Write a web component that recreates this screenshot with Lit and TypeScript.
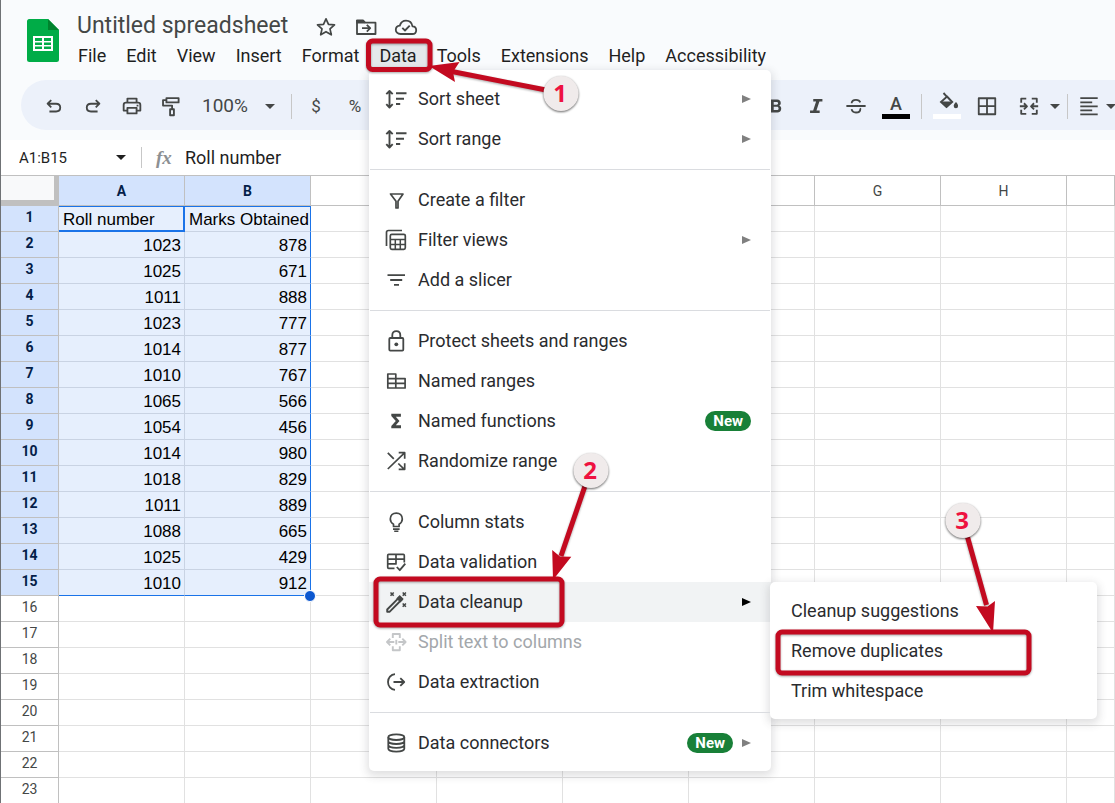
import { LitElement, html, css, svg, nothing, TemplateResult } from "lit";
import { customElement, property } from "lit/decorators.js";
import { classMap } from "lit/directives/class-map.js";

const s = (d: string, w = 1.8) => svg`<path d=${d} fill="none" stroke="currentColor" stroke-width=${w} stroke-linejoin="round" />`;
const f = (d: string) => svg`<path d=${d} fill="currentColor" />`;

const ICONS: Record<string, unknown> = {
  star: svg`${s("M12 3.8l2.500 5.500 6 .6-4.500 4 1.300 5.900L12 16.700l-5.300 3.100L8 13.900l-4.500-4 6-.6z", 1.7)}`,
  folder: svg`${s("M3 5.5h6.2l2 2.2H21.5V19H3z")}${f("M2.2 5h7l1.8 3.4H2.2z")}${s("M8 13.2h8M12.8 9.8l3.4 3.4-3.4 3.4")}`,
  cloud: svg`${s("M6.6 19C3.4 19 1.8 17 1.8 14.8c0-2.300 1.700-4 4-4.200C6.800 7.500 9.200 5.700 12 5.700c3.400 0 5.900 2.300 6.500 5.700 2.200.1 3.700 1.700 3.700 3.800 0 2.200-1.600 3.800-3.900 3.800z")}${s("M8.300 12.800l2.700 2.700 4.700-4.800")}`,
  undo: svg`${s("M9 5.500L5 9.500l4 4M5.300 9.500h8.900c2.900 0 4.600 1.700 4.600 4.200s-1.700 4.300-4.600 4.300H7", 2)}`,
  redo: svg`${s("M15 5.500l4 4-4 4M18.700 9.500H9.800c-2.900 0-4.600 1.700-4.600 4.200S6.900 18 9.800 18H17", 2)}`,
  print: svg`${s("M7 8V3.900h10V8M7 17H2.900V11c0-1.600.9-2.600 2.500-2.600h13.200c1.600 0 2.500 1 2.500 2.600v6H17M7 14h10v6.100H7z", 2)}${f("M17 10.500h2v2h-2z")}`,
  paint: svg`${s("M7 3.400h13.300v4.700H7zM7 5.500H3.300v6h9.900v4M11 15.500h4.200v6.600H11z", 2)}`,
  bold: svg`${f("M6.500 5h6.700c2.500 0 4 1.400 4 3.600 0 1.500-.7 2.400-1.800 2.900 1.500.5 2.300 1.700 2.300 3.400 0 2.500-1.600 4.100-4.400 4.100H6.500zm3 2.500v3h3.200c1 0 1.600-.6 1.600-1.500s-.6-1.500-1.600-1.500zm0 5.300v3.600h3.500c1.100 0 1.800-.7 1.800-1.800s-.7-1.800-1.800-1.800z")}`,
  italic: svg`${f("M9 4.300h10v2.800h-3.300l-3.200 9.800h3.500v2.800H5.500v-2.800h3.400l3.200-9.800H9z")}`,
  strike: svg`${s("M1.500 12h21M7.200 9c.2-2.600 2.100-3.700 4.800-3.700 2.500 0 4 1 4.700 2.800M7.200 15.500c.4 2.400 2.200 3.600 4.800 3.600 2.800 0 4.700-1.300 4.700-3.600 0-.4 0-.7-.2-1", 2)}`,
  border: svg`${s("M3 3.500h18v17.500H3zM12 3.500v17.500M3 12.200h18", 2)}`,
  merge: svg`${s("M9 4H3.500v4.500M15 4h5.500v4.500M9 20.500H3.500V16M15 20.500h5.500V16M2 12.300h7.500M22 12.300h-7.500M6.500 9l3.300 3.300-3.300 3.300M17.500 9l-3.300 3.300 3.300 3.300", 2)}`,
  align: svg`${s("M2.500 3.500h19M2.500 8h13M2.500 12.400h19M2.500 16.800h13M2.500 21.200h19", 1.900)}`,
  sort: svg`${s("M5.500 4v17M2.300 7.200L5.500 4l3.200 3.200M2.300 17.200l3.200 3.300 3.200-3.300", 1.900)}${s("M12 6.300h10.500M12 11.800h8M12 17h4.200", 1.900)}`,
  funnel: svg`${s("M6.500 6h12.500l-5 7.200V20h-2v-6.800z", 1.700)}`,
  views: svg`${s("M2.500 18V4.500c0-1.200.8-2 2-2H18", 1.700)}<rect x="6.300" y="6.300" width="15" height="15" rx="1.500" fill="none" stroke="currentColor" stroke-width="1.700" />${s("M6.300 11.500h15M6.300 16.400h15M11.300 11.500v10M16.300 11.500v10", 1.500)}`,
  slicer: svg`${s("M3.500 7.200h17.500M6.200 12h12M10 16.900h5", 1.800)}`,
  lock: svg`<rect x="5.300" y="9" width="14" height="12.600" rx="1" fill="none" stroke="currentColor" stroke-width="1.800" />${s("M8.300 9V6.200c0-2.500 1.600-4 4-4s4 1.500 4 4V9")}<circle cx="12.300" cy="15.300" r="1.900" fill="currentColor" />`,
  ranges: svg`${s("M3.800 5h8v14h-8zM11.800 9.600h9.300V19H11.800M3.800 9.600h8M3.800 14.300h17.300", 1.700)}`,
  sigma: svg`${f("M7.300 4.700h9.600v3H11.800l3.700 4.300-3.700 4.300h5.200v3H7.300v-2.200L11.800 12 7.300 6.900z")}`,
  shuffle: svg`${s("M3.800 20L20.500 3.800M14.700 3.700h6v6M3.800 3.800l6 6M14.300 14.500l6 5.800M14.700 20.300h6v-6", 1.700)}`,
  bulb: svg`${s("M9.500 16.500v-2.200c-2-1.200-3.200-3-3.200-5.200 0-3.700 2.500-6 6-6s6 2.300 6 6c0 2.200-1.200 4-3.200 5.200v2.200z", 1.700)}${f("M9 18.300h6.600v1.700H9zM10.200 20.600h4.200v1.500h-4.200z")}`,
  validate: svg`${s("M10.500 18.300H4.700c-.6 0-1-.4-1-1V5.400c0-.6.4-1 1-1h14.600c.6 0 1 .4 1 1v7M3.700 9.200h16.600M3.700 13.800h9M12 4.400v9.400", 1.700)}${s("M12.800 17l3 3.200 5.500-6.500", 1.800)}`,
  wand: svg`${s("M3.200 19.500L15.500 7.200l2.300 2.300L5.500 21.800H3.200z", 1.900)}${f("M12.300 8.500l3.400-3.400 4 4-3.400 3.400z")}${s("M6.500 2.500l3.200 3.200M9.700 2.500L6.500 5.700M18.700 2.500l3.200 3.200M21.900 2.500l-3.200 3.200M18.700 13.500l3.200 3.200M21.900 13.500l-3.200 3.200", 1.600)}`,
  split: svg`${s("M8.800 8V4h7v4M8.800 16.200v4h7v-4M10.300 12H3.300M14.300 12h7.200M6.300 8.700L3 12l3.300 3.300M18.300 8.700l3.300 3.300-3.300 3.300M12.300 9.800v4.600", 1.900)}`,
  extract: svg`${s("M11 4.200C6.900 4.500 4 7.800 4 12s2.900 7.500 7 7.800M9.500 12H20M16.300 8.200l3.900 3.800-3.900 3.800", 1.800)}`,
  database: svg`<ellipse cx="12.300" cy="6.200" rx="8" ry="2.800" fill="none" stroke="currentColor" stroke-width="1.800" />${s("M4.300 6.200v11.600c0 1.600 3.500 2.800 8 2.800s8-1.200 8-2.800V6.200M4.300 10.200c0 1.600 3.500 2.800 8 2.800s8-1.200 8-2.800M4.300 14c0 1.600 3.500 2.800 8 2.800s8-1.200 8-2.800")}`,
};

const icon = (name: string) => html`<svg class="icon" viewBox="0 0 24 24" aria-hidden="true">${ICONS[name]}</svg>`;
const caret = html`<svg class="caret" viewBox="0 0 10 5" aria-hidden="true"><path d="M0 0h10L5 5z" fill="currentColor" /></svg>`;
const bucket = html`<svg class="bucket" viewBox="0 0 24 18" aria-hidden="true">
  <path d="M8.500 1l3.500 3.800M12 4.500l5.200 5.500-5.700 5-5.500-5z" fill="none" stroke="currentColor" stroke-width="1.900" />
  <path d="M5.500 9.500h12L11.500 16zM21 10c1.300 1.600 2.100 2.700 2.100 4a2.200 2.200 0 0 1-4.400 0c0-1.300.9-2.400 2.300-4z" fill="currentColor" />
</svg>`;

interface Item {
  label: string;
  icon: string;
  more?: boolean;
  badge?: boolean;
  disabled?: boolean;
  open?: boolean;
}

const GROUPS: Item[][] = [
  [
    { label: "Sort sheet", icon: "sort", more: true },
    { label: "Sort range", icon: "sort", more: true },
  ],
  [
    { label: "Create a filter", icon: "funnel" },
    { label: "Filter views", icon: "views", more: true },
    { label: "Add a slicer", icon: "slicer" },
  ],
  [
    { label: "Protect sheets and ranges", icon: "lock" },
    { label: "Named ranges", icon: "ranges" },
    { label: "Named functions", icon: "sigma", badge: true },
    { label: "Randomize range", icon: "shuffle" },
  ],
  [
    { label: "Column stats", icon: "bulb" },
    { label: "Data validation", icon: "validate" },
    { label: "Data cleanup", icon: "wand", more: true, open: true },
    { label: "Split text to columns", icon: "split", disabled: true },
    { label: "Data extraction", icon: "extract" },
  ],
  [{ label: "Data connectors", icon: "database", more: true, badge: true }],
];

const MENUS = ["File", "Edit", "View", "Insert", "Format", "Data", "Tools", "Extensions", "Help", "Accessibility"];
const COLUMNS = "ABCDEFGH".split("");
const ROW_COUNT = 23;
const MARKS = [
  [1023, 878], [1025, 671], [1011, 888], [1023, 777], [1014, 877], [1010, 767], [1065, 566],
  [1054, 456], [1014, 980], [1018, 829], [1011, 889], [1088, 665], [1025, 429], [1010, 912],
];
const CELLS: (string | number)[][] = [["Roll number", "Marks Obtained"], ...MARKS];

const shared = css`
  * { box-sizing: border-box; }
  button, input, select {
    font: inherit; color: inherit; background: none; border: 0; margin: 0; padding: 0; border-radius: 0;
  }
  .icon { width: 24px; height: 24px; flex: none; display: block; }
`;

@customElement("data-menu")
export class DataMenu extends LitElement {
  static styles = [shared, css`
    :host { display: block; width: 402px; font: 18px/24px Roboto, sans-serif; color: #2a2b2e; }
    ul { list-style: none; margin: 0; padding: 9px 0 8px; background: #fff; border-radius: 5px;
      box-shadow: 0 3px 8px 2px rgba(60, 64, 67, .16); }
    li { position: relative; }
    .rule { height: 1px; margin: 10px 1px; background: #dadce0; }
    .item { display: flex; align-items: center; width: 100%; height: 40px; padding: 0 20px 0 15px; text-align: left; }
    .item .icon { margin-right: 9px; color: #444746; }
    .label { flex: 1; padding-left: 1px; }
    .open { background: #f1f3f4; }
    .disabled { color: #a3a7ab; }
    .disabled .icon { color: #c4c6c8; }
    .badge { padding: 0 8px; border-radius: 10px; background: #188038; color: #fff; font-size: 15px; font-weight: 700; line-height: 20px; }
    .more { width: 9px; height: 8px; margin-left: 9px; color: #808080; }
    .open .more { color: #000; }
    .submenu { position: absolute; top: 0; left: 401px; width: 327px; }
    .submenu .item { padding-left: 21px; }
  `];

  private renderItem(item: Item): TemplateResult {
    return html`<li role="none">
      <button class=${classMap({ item: true, open: !!item.open, disabled: !!item.disabled })} role="menuitem" ?disabled=${item.disabled}>
        ${icon(item.icon)}<span class="label">${item.label}</span>
        ${item.badge ? html`<span class="badge">New</span>` : nothing}
        ${item.more ? html`<svg class="more" viewBox="0 0 9 8" aria-hidden="true"><path d="M0 0l9 4-9 4z" fill="currentColor" /></svg>` : nothing}
      </button>
      ${item.open ? html`<ul class="submenu" role="menu">
        ${["Cleanup suggestions", "Remove duplicates", "Trim whitespace"].map((t) => html`<li role="none"><button class="item" role="menuitem">${t}</button></li>`)}
      </ul>` : nothing}
    </li>`;
  }

  render() {
    return html`<ul role="menu" aria-label="Data">
      ${GROUPS.map((g, i) => html`${i ? html`<li class="rule" role="separator"></li>` : nothing}${g.map((it) => this.renderItem(it))}`)}
    </ul>`;
  }
}

@customElement("sheet-grid")
export class SheetGrid extends LitElement {
  static styles = [shared, css`
    :host { display: block; overflow: hidden; background: #fff; }
    table { table-layout: fixed; width: 100%; min-width: 1080px; border-collapse: separate; border-spacing: 0; }
    .head { width: 58px; }
    .data { width: 126px; }
    th, td { padding: 0; border: 0 solid #e1e1e1; border-width: 0 1px 1px 0; white-space: nowrap; }
    th, .rest { border-color: #c0c0c0; font: 14px/16px Roboto, sans-serif; color: #444746; }
    thead th { height: 30px; }
    tbody th { height: 26px; padding-bottom: 3px; }
    .corner { background: #f8f9fa; border-color: #c0c0c0; border-width: 0 5px 6px 0; }
    th.picked { background: #d3e3fd; color: #041e49; font-weight: 700; }
    td { font: 17px/20px "Liberation Sans", Arial, sans-serif; color: #000; vertical-align: bottom; padding: 0 3px 1px 4px; position: relative; }
    .num { text-align: right; }
    .in { background: #e6effd; border-color: #c9d3e3; }
    .last-col { border-right-color: #1a73e8; }
    .last-row { border-bottom-color: #1a73e8; }
    .active { border-color: #1a73e8; box-shadow: inset -1px -1px #1a73e8, inset 0 1px #1a73e8; }
    .top { box-shadow: inset 0 1px #1a73e8; }
    .handle { position: absolute; right: -6px; bottom: -7px; width: 12px; height: 12px; border-radius: 50%; background: #0b57d0; border: 1px solid #fff; z-index: 1; }
  `];

  render() {
    const last = CELLS.length;
    return html`<table>
      <colgroup><col class="head" />${COLUMNS.map(() => html`<col class="data" />`)}<col /></colgroup>
      <thead><tr><td class="corner"></td>${COLUMNS.map((c, i) => html`<th scope="col" class=${classMap({ picked: i < 2 })}>${c}</th>`)}<td class="rest"></td></tr></thead>
      <tbody>
        ${Array.from({ length: ROW_COUNT }, (_, r) => html`<tr>
          <th scope="row" class=${classMap({ picked: r < last })}>${r + 1}</th>
          ${COLUMNS.map((_c, c) => {
            const inside = r < last && c < 2;
            return html`<td class=${classMap({
              in: inside, num: inside && r > 0, active: r === 0 && c === 0, top: r === 0 && c === 1,
              "last-col": inside && c === 1, "last-row": inside && r === last - 1,
            })}>${inside ? CELLS[r][c] : nothing}${inside && c === 1 && r === last - 1 ? html`<span class="handle"></span>` : nothing}</td>`;
          })}<td></td>
        </tr>`)}
      </tbody>
    </table>`;
  }
}

@customElement("step-marks")
export class StepMarks extends LitElement {
  static styles = css`
    :host { display: block; pointer-events: none; }
    svg { display: block; }
    .line { fill: none; stroke: #c30a20; stroke-width: 5; filter: drop-shadow(0 1px 1px rgba(0, 0, 0, .35)); }
    .tip { fill: #c30a20; }
    .disc { fill: #f0ebeb; filter: drop-shadow(0 1px 1px rgba(0, 0, 0, .6)); }
    .digit { font: 700 24px "Open Sans", sans-serif; fill: #ee1240; text-anchor: middle; }
  `;

  render() {
    return html`<svg width="1115" height="803" viewBox="0 0 1115 803">
      <rect class="line" x="368.500" y="41" width="61.500" height="28.500" rx="4" />
      <rect class="line" x="376" y="579" width="186" height="46" rx="4" />
      <rect class="line" x="778" y="632" width="251" height="41" rx="4" />
      <path class="line" d="M452 71.500L546 90M585 486L561 556M967.500 537L986.500 605" />
      <path class="tip" d="M429 66l30.500-4-6.500 10 2 10zM553 580l-.8-30 7.800 6.500 11.300.2zM993 633l-17-27 11.500.500 7.500-5.500z" />
      <circle class="disc" cx="561" cy="93.500" r="17.500" />
      <circle class="disc" cx="591" cy="470.500" r="17.500" />
      <circle class="disc" cx="963" cy="520.500" r="17.500" />
      <text class="digit" x="560" y="102">1</text>
      <text class="digit" x="590" y="479">2</text>
      <text class="digit" x="962" y="529">3</text>
    </svg>`;
  }
}

@customElement("app-root")
export class AppRoot extends LitElement {
  @property() formula = "Roll number";

  static styles = [shared, css`
    :host { display: block; position: relative; height: 100vh; overflow: hidden; font: 18px/24px Roboto, sans-serif; color: #1f1f1f; background: #f9fbfd; }
    .app { display: flex; flex-direction: column; height: 100%; border-left: 1px solid #6f7275; }
    .header { display: flex; height: 80px; padding: 11px 0 0 26px; gap: 11px; }
    .logo { width: 32px; height: 44px; margin-top: 8px; flex: none; }
    .titles { display: flex; flex-direction: column; gap: 3px; }
    .title-row { display: flex; align-items: center; height: 28px; padding-left: 7px; color: #444746; }
    h1 { margin: 0 26px 0 0; padding-top: 2px; font-size: 23px; font-weight: 400; line-height: 28px; }
    .title-icons { display: flex; gap: 16px; padding-top: 4px; }
    .menubar { display: flex; }
    .menu { padding: 2px 10px; border-radius: 4px; line-height: 24px; }
    .menu.on { background: #e4e8eb; }
    .titles .menubar { margin-left: -2px; }
    .toolbar { display: flex; align-items: center; height: 50px; margin: 0 0 10px 20px; padding: 2px 0 0 14px; border-radius: 25px 0 0 25px; background: #ecf1fa; color: #444746; flex: none; overflow: hidden; }
    .left, .right { display: flex; align-items: center; gap: 1px; flex: none; }
    .right { gap: 2px; margin-left: 383px; }
    .tool { display: grid; place-items: center; width: 38px; height: 38px; flex: none; font-size: 17px; }
    .sep { width: 1px; height: 25px; margin: 0 4px; background: #c7c7c7; }
    .caret { width: 10px; height: 5px; flex: none; }
    .zoom { position: relative; display: flex; align-items: center; width: 95px; padding: 0 11px; }
    .zoom select { flex: 1; appearance: none; font-size: 19px; outline: 0; }
    .swatch { display: grid; grid-template-rows: 22px 5px; justify-items: center; width: 28px; padding-bottom: 2px; font-size: 18px; line-height: 24px; font-weight: 500; }
    .swatch .bar { width: 28px; background: #000; }
    .swatch .bucket { width: 24px; height: 18px; }
    .swatch .white { background: #fff; }
    .split { display: flex; align-items: center; width: 53px; height: 38px; padding-left: 10px; gap: 10px; }
    .split.snug { padding-left: 4px; gap: 6px; }
    .split .icon, .tool > .icon { width: 22px; height: 22px; }
    .formula-bar { display: flex; align-items: center; height: 36px; flex: none; padding-left: 18px; background: #fff; border-bottom: 1px solid #c0c0c0; }
    .name { width: 97px; font-size: 15px; outline: 0; }
    .formula-bar .sep { height: 21px; margin: 0 14px 0 15px; }
    .fx { width: 17px; margin-right: 12px; font: italic 700 19px/24px "Liberation Serif", serif; color: #8d9093; }
    .formula { flex: 1; outline: 0; }
    sheet-grid { flex: 1; min-height: 0; }
    data-menu { position: absolute; left: 369px; top: 70px; }
    step-marks { position: absolute; left: 0; top: 0; }
  `];

  private tool(name: string, label: string) {
    return html`<button class="tool" aria-label=${label}>${icon(name)}</button>`;
  }

  render() {
    return html`
      <div class="app">
        <header class="header">
          <svg class="logo" viewBox="0 0 32 44" role="img" aria-label="Sheets">
            <path d="M3 0h18l11 11v29.500a2.500 2.500 0 0 1-2.500 2.500h-27A2.500 2.500 0 0 1 0 40.500V2.500A2.500 2.500 0 0 1 3 0z" fill="#00ac47" />
            <path d="M21 0l11 11H21z" fill="#00832d" />
            <path d="M6 17h20v15H6z" fill="#fff" />
            <path d="M8 19h7v3H8zM17 19h7v3h-7zM8 23.500h7v2.500H8zM17 23.500h7v2.500h-7zM8 27.500h7v2.500H8zM17 27.500h7v2.500h-7z" fill="#00ac47" />
          </svg>
          <div class="titles">
            <div class="title-row">
              <h1>Untitled spreadsheet</h1>
              <div class="title-icons">
                <button aria-label="Star">${icon("star")}</button>
                <button aria-label="Move">${icon("folder")}</button>
                <button aria-label="Document status">${icon("cloud")}</button>
              </div>
            </div>
            <nav class="menubar">${MENUS.map((m) => html`<button class=${classMap({ menu: true, on: m === "Data" })}>${m}</button>`)}</nav>
          </div>
        </header>

        <div class="toolbar" role="toolbar">
          <div class="left">
            ${this.tool("undo", "Undo")}${this.tool("redo", "Redo")}${this.tool("print", "Print")}${this.tool("paint", "Paint format")}
            <label class="zoom"><select aria-label="Zoom"><option>100%</option></select>${caret}</label>
            <span class="sep"></span>
            <button class="tool" aria-label="Format as currency">$</button>
            <button class="tool" aria-label="Format as percent">%</button>
          </div>
          <div class="right">
            ${this.tool("bold", "Bold")}${this.tool("italic", "Italic")}${this.tool("strike", "Strikethrough")}
            <button class="tool" aria-label="Text color"><span class="swatch">A<span class="bar"></span></span></button>
            <span class="sep"></span>
            <button class="tool" aria-label="Fill color"><span class="swatch">${bucket}<span class="bar white"></span></span></button>
            ${this.tool("border", "Borders")}
            <button class="split" aria-label="Merge cells">${icon("merge")}${caret}</button>
            <span class="sep"></span>
            <button class="split snug" aria-label="Horizontal align">${icon("align")}${caret}</button>
          </div>
        </div>

        <div class="formula-bar">
          <input class="name" aria-label="Name box" value="A1:B15" />${caret}
          <span class="sep"></span>
          <span class="fx">fx</span>
          <input class="formula" aria-label="Formula" .value=${this.formula} />
        </div>

        <sheet-grid></sheet-grid>
      </div>
      <data-menu></data-menu>
      <step-marks></step-marks>
    `;
  }
}
